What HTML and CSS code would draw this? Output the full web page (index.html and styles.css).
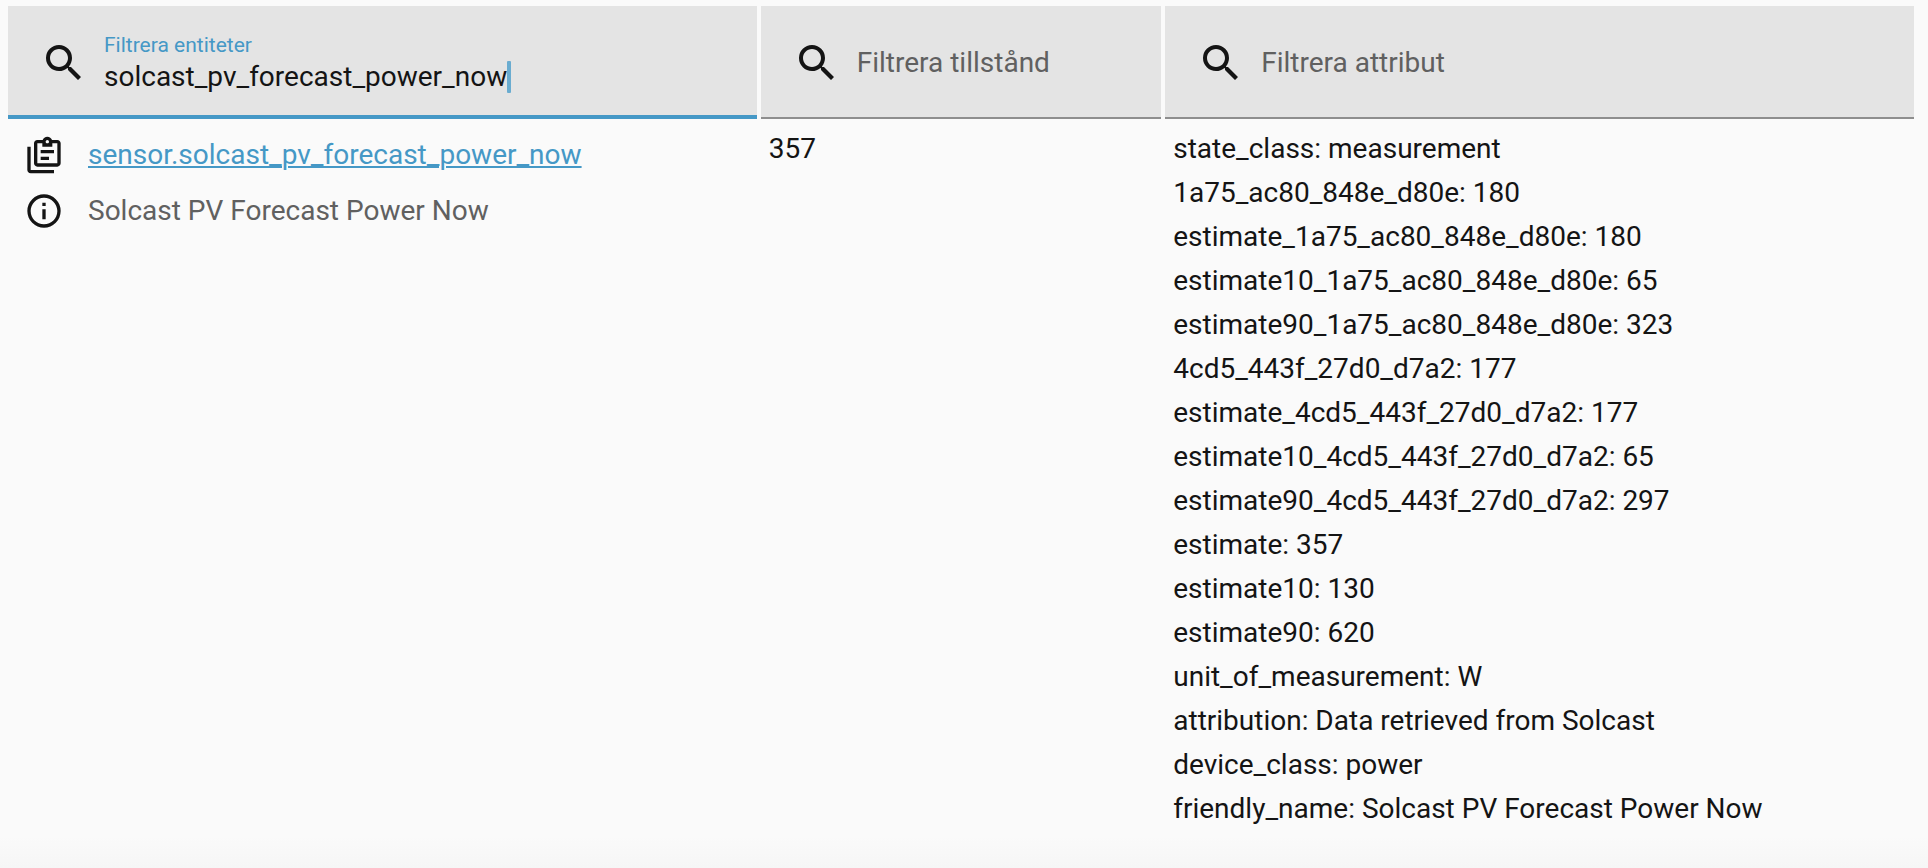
FILE: index.html
```html
<!DOCTYPE html>
<html lang="sv">
<head>
    <meta charset="UTF-8">
    <meta name="viewport" content="width=device-width, initial-scale=1.0">
    <title>Tillstånd</title>
    <link rel="stylesheet" href="styles.css">
</head>
<body>
    <svg class="sprite" aria-hidden="true">
        <symbol id="icon-search" viewBox="0 0 24 24">
            <path d="M9.5,3A6.5,6.5 0 0,1 16,9.5C16,11.11 15.41,12.59 14.44,13.73L14.71,14H15.5L20.5,19L19,20.5L14,15.5V14.71L13.73,14.44C12.59,15.41 11.11,16 9.5,16A6.5,6.5 0 0,1 3,9.5A6.5,6.5 0 0,1 9.5,3M9.5,5C7,5 5,7 5,9.5C5,12 7,14 9.5,14C12,14 14,12 14,9.5C14,7 12,5 9.5,5Z"/>
        </symbol>
        <symbol id="icon-copy" viewBox="0 0 24 24">
            <path d="M4,7V21H18V23H4C2.9,23 2,22.1 2,21V7H4M20,3C21.1,3 22,3.9 22,5V17C22,18.1 21.1,19 20,19H8C6.9,19 6,18.1 6,17V5C6,3.9 6.9,3 8,3H11.18C11.6,1.84 12.7,1 14,1C15.3,1 16.4,1.84 16.82,3H20M14,3C13.45,3 13,3.45 13,4C13,4.55 13.45,5 14,5C14.55,5 15,4.55 15,4C15,3.45 14.55,3 14,3M11,7V5H8V17H20V5H17V7H11M18,11H10V9H18V11M15,15H10V13H15V15Z"/>
        </symbol>
        <symbol id="icon-info" viewBox="0 0 24 24">
            <path d="M11,9H13V7H11M12,20C7.59,20 4,16.41 4,12C4,7.59 7.59,4 12,4C16.41,4 20,7.59 20,12C20,16.41 16.41,20 12,20M12,2A10,10 0 0,0 2,12A10,10 0 0,0 12,22A10,10 0 0,0 22,12A10,10 0 0,0 12,2M11,17H13V11H11V17Z"/>
        </symbol>
    </svg>

    <table class="entities">
        <colgroup>
            <col>
            <col class="col-state">
            <col>
        </colgroup>
        <thead>
            <!-- Filter -->
            <tr>
                <th>
                    <div class="filter filter-active">
                        <svg class="icon-search"><use href="#icon-search"/></svg>
                        <div class="filter-text">
                            <label for="filter-entity">Filtrera entiteter</label>
                            <div class="filter-value">
                                <input type="text" id="filter-entity" value="solcast_pv_forecast_power_now" spellcheck="false">
                                <span class="caret"></span>
                            </div>
                        </div>
                    </div>
                </th>
                <th>
                    <div class="filter">
                        <svg class="icon-search"><use href="#icon-search"/></svg>
                        <input type="text" placeholder="Filtrera tillstånd" aria-label="Filtrera tillstånd">
                    </div>
                </th>
                <th>
                    <div class="filter">
                        <svg class="icon-search"><use href="#icon-search"/></svg>
                        <input type="text" placeholder="Filtrera attribut" aria-label="Filtrera attribut">
                    </div>
                </th>
            </tr>
        </thead>
        <tbody>
            <tr>
                <td>
                    <div class="entity-row">
                        <button type="button" aria-label="Kopiera"><svg><use href="#icon-copy"/></svg></button>
                        <a href="#">sensor.solcast_pv_forecast_power_now</a>
                    </div>
                    <div class="entity-row entity-name">
                        <button type="button" aria-label="Mer information"><svg><use href="#icon-info"/></svg></button>
                        <span>Solcast PV Forecast Power Now</span>
                    </div>
                </td>
                <td>357</td>
                <td class="attributes">state_class: measurement
1a75_ac80_848e_d80e: 180
estimate_1a75_ac80_848e_d80e: 180
estimate10_1a75_ac80_848e_d80e: 65
estimate90_1a75_ac80_848e_d80e: 323
4cd5_443f_27d0_d7a2: 177
estimate_4cd5_443f_27d0_d7a2: 177
estimate10_4cd5_443f_27d0_d7a2: 65
estimate90_4cd5_443f_27d0_d7a2: 297
estimate: 357
estimate10: 130
estimate90: 620
unit_of_measurement: W
attribution: Data retrieved from Solcast
device_class: power
friendly_name: Solcast PV Forecast Power Now</td>
            </tr>
        </tbody>
    </table>
</body>
</html>
```
FILE: styles.css
```css
* {
    box-sizing: border-box;
}

body {
    margin: 0;
    padding: 2px 10px 0 4px;
    min-height: 100vh;
    font-family: Roboto, sans-serif;
    font-size: 28px;
    line-height: 44px;
    color: #141414;
    background: linear-gradient(to top, #f6f6f6, #fafafa 32px);
}

.sprite {
    display: none;
}

svg {
    display: block;
    fill: currentColor;
}

/* Table */
.entities {
    width: 100%;
    table-layout: fixed;
    border-spacing: 4px;
}

.col-state {
    width: 21.1%;
}

th {
    padding: 0;
    font-weight: 400;
    text-align: left;
}

td {
    padding: 4px 8px;
    vertical-align: top;
}

.attributes {
    white-space: pre-line;
}

/* Filter fields */
.filter {
    display: flex;
    align-items: center;
    gap: 16px;
    height: 113px;
    padding: 0 32px;
    background-color: #e4e4e4;
    box-shadow: inset 0 -2px #8e8e8e;
}

.filter-active {
    box-shadow: inset 0 -4px #4598c6;
}

.icon-search {
    flex: none;
    width: 48px;
    height: 48px;
}

.filter-text {
    display: flex;
    flex-direction: column;
    gap: 4px;
    min-width: 0;
}

.filter label {
    font-size: 21px;
    line-height: 24px;
    color: #4598c6;
}

.filter-value {
    display: flex;
}

.filter input {
    min-width: 0;
    width: 100%;
    height: 32px;
    padding: 0;
    border: none;
    outline: none;
    background: none;
    font: inherit;
    line-height: 32px;
    color: inherit;
}

.filter input::placeholder {
    color: #606060;
    opacity: 1;
}

.filter-value input {
    width: auto;
    field-sizing: content;
    caret-color: transparent;
}

.caret {
    flex: none;
    width: 4px;
    height: 32px;
    border-radius: 1px;
    background-color: #6aacd0;
}

/* Entity column */
.entity-row {
    display: flex;
    align-items: center;
    gap: 24px;
    height: 56px;
    padding-left: 8px;
}

.entity-row button {
    flex: none;
    padding: 0;
    border: none;
    background: none;
    color: inherit;
    cursor: pointer;
}

.entity-row svg {
    width: 40px;
    height: 40px;
}

.entity-row a {
    color: #4598c6;
    text-decoration-thickness: 2px;
    text-underline-offset: 2px;
}

.entity-name span {
    color: #606060;
}
```
